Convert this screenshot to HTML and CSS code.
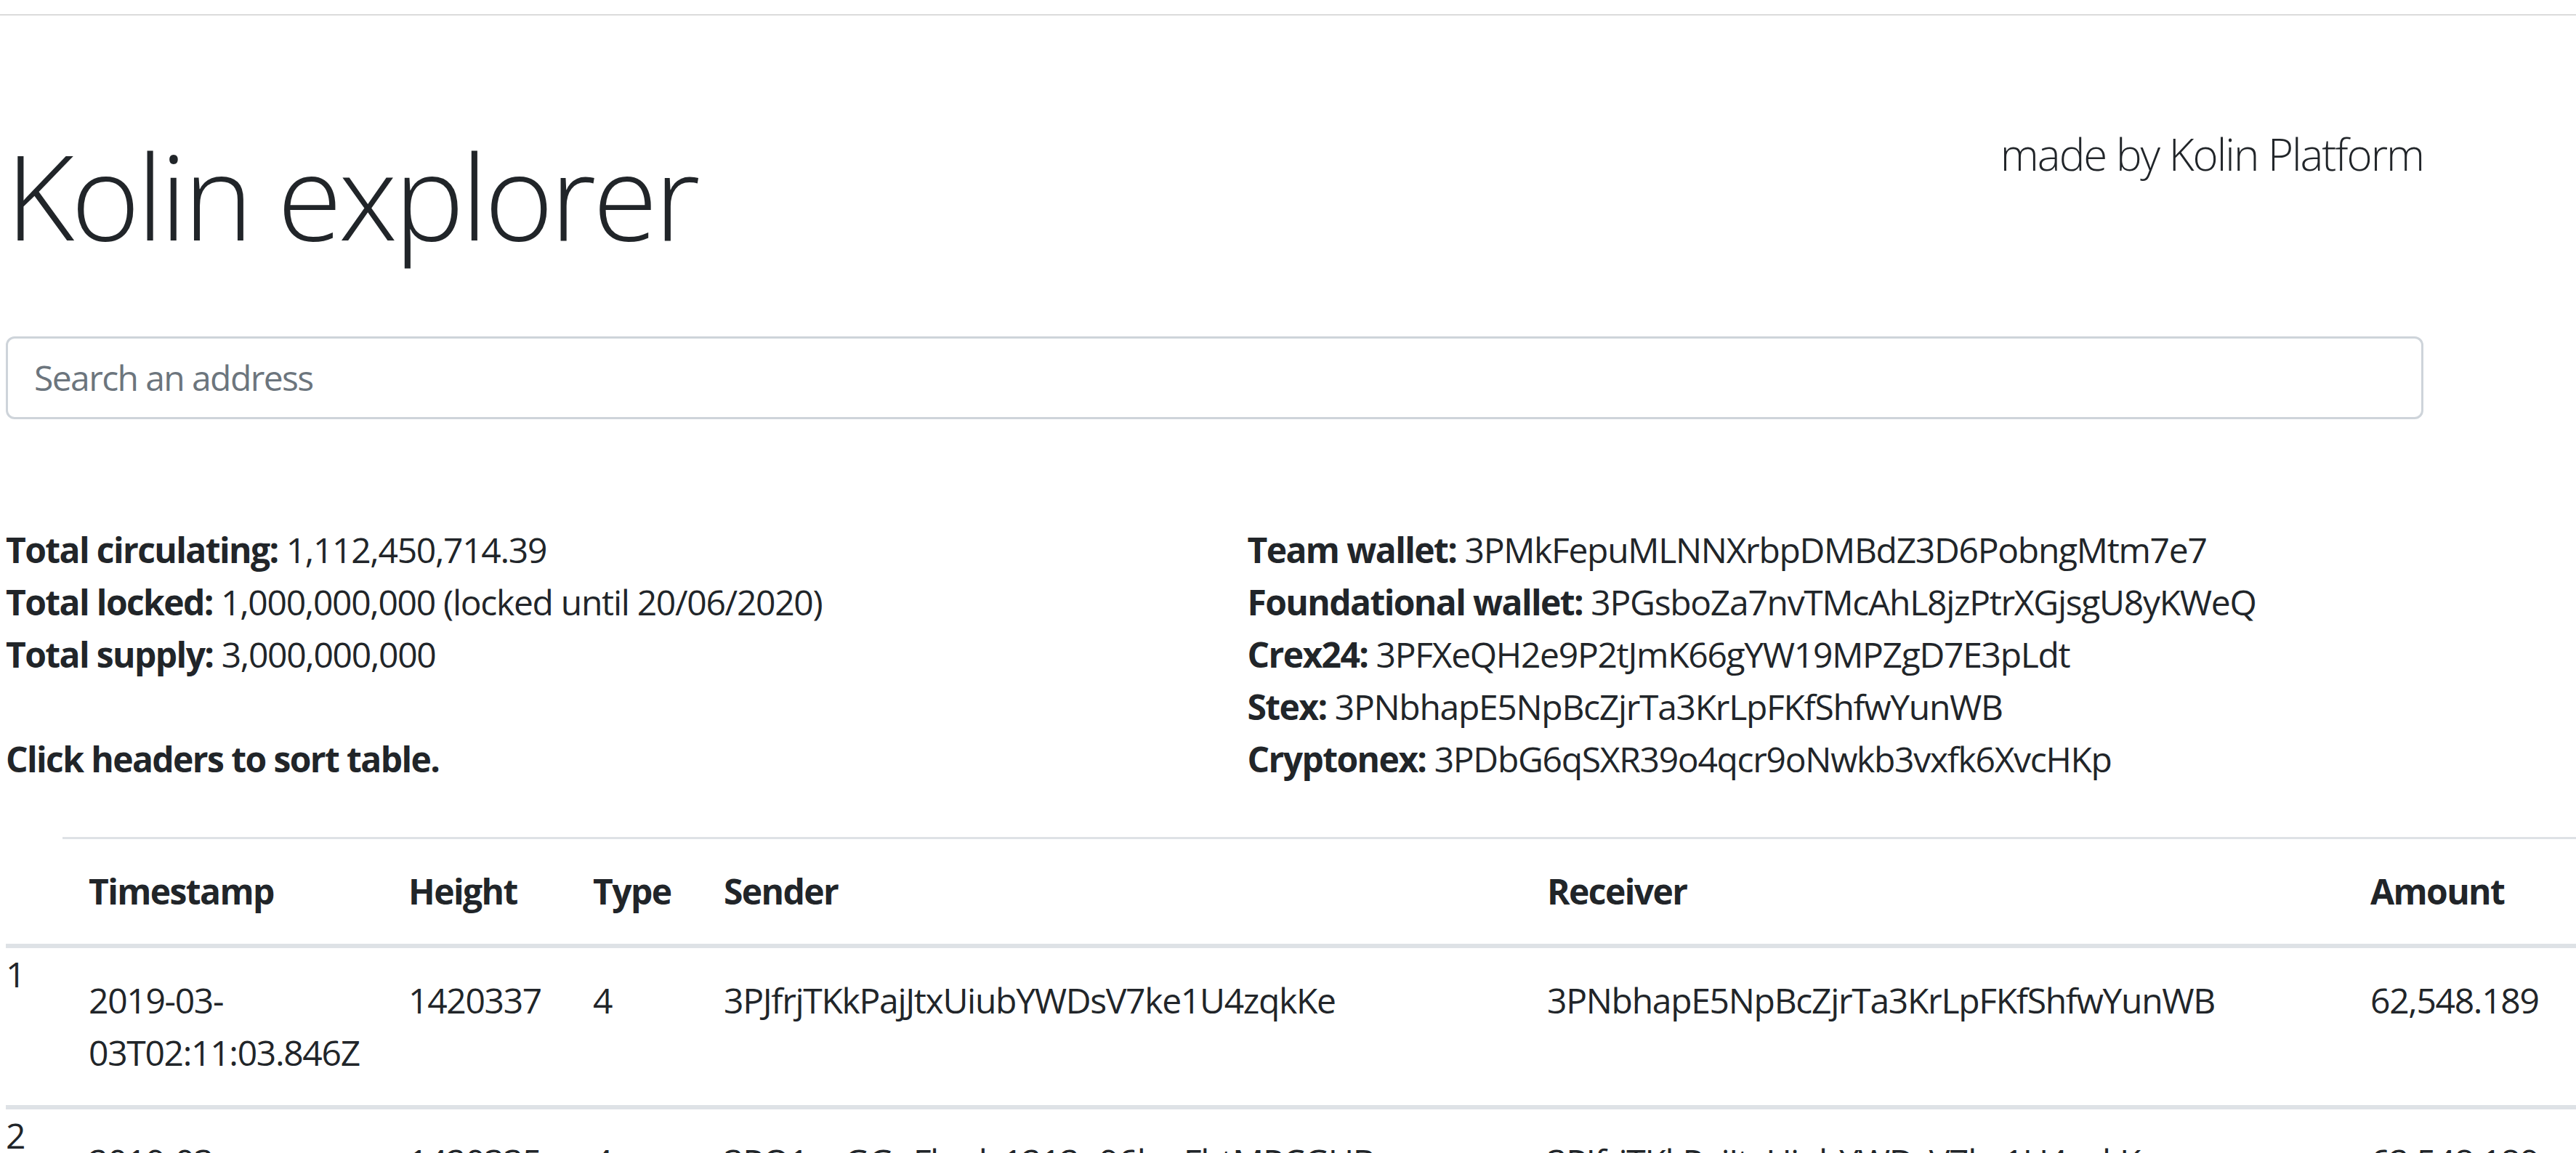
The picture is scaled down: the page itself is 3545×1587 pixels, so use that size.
FILE: index.html
```html
<!DOCTYPE html>
<html lang="en">
<head>
<meta charset="utf-8">
<title>Kolin explorer</title>
<link rel="stylesheet" href="styles.css">
</head>
<body>
<div class="topline"></div>
<div class="page">
  <header class="masthead">
    <h1 class="title">Kolin explorer</h1>
    <p class="credit">made by Kolin Platform</p>
  </header>
  <input class="search" type="text" placeholder="Search an address">
  <section class="stats">
    <div class="stats-col">
      <div class="stat"><b>Total circulating:</b> 1,112,450,714.39</div>
      <div class="stat"><b>Total locked:</b> 1,000,000,000 (locked until 20/06/2020)</div>
      <div class="stat"><b>Total supply:</b> 3,000,000,000</div>
      <div class="stat note"><b>Click headers to sort table.</b></div>
    </div>
    <div class="stats-col">
      <div class="stat"><b>Team wallet:</b> 3PMkFepuMLNNXrbpDMBdZ3D6PobngMtm7e7</div>
      <div class="stat"><b>Foundational wallet:</b> 3PGsboZa7nvTMcAhL8jzPtrXGjsgU8yKWeQ</div>
      <div class="stat"><b>Crex24:</b> 3PFXeQH2e9P2tJmK66gYW19MPZgD7E3pLdt</div>
      <div class="stat"><b>Stex:</b> 3PNbhapE5NpBcZjrTa3KrLpFKfShfwYunWB</div>
      <div class="stat"><b>Cryptonex:</b> 3PDbG6qSXR39o4qcr9oNwkb3vxfk6XvcHKp</div>
    </div>
  </section>
  <table class="tx">
    <colgroup>
      <col class="c-idx"><col class="c-time"><col class="c-height"><col class="c-type"><col class="c-addr"><col class="c-addr"><col class="c-amount">
    </colgroup>
    <thead>
      <tr>
        <th class="idx"></th>
        <th>Timestamp</th>
        <th>Height</th>
        <th>Type</th>
        <th>Sender</th>
        <th>Receiver</th>
        <th>Amount</th>
      </tr>
    </thead>
    <tbody>
      <tr>
        <td class="idx">1</td>
        <td>2019-03-03T02:11:03.846Z</td>
        <td>1420337</td>
        <td>4</td>
        <td>3PJfrjTKkPajJtxUiubYWDsV7ke1U4zqkKe</td>
        <td>3PNbhapE5NpBcZjrTa3KrLpFKfShfwYunWB</td>
        <td>62,548.189</td>
      </tr>
      <tr>
        <td class="idx">2</td>
        <td>2019-03-03T02:09:41.512Z</td>
        <td>1420335</td>
        <td>4</td>
        <td>3PQ1exGGpFhzdv1212o96hwFhtMPCGUB</td>
        <td>3PJfrjTKkPajJtxUiubYWDsV7ke1U4zqkKe</td>
        <td>62,548.189</td>
      </tr>
    </tbody>
  </table>
</div>
</body>
</html>
```

FILE: styles.css
```css
html, body {
  height: 100%;
  overflow: hidden;
}

body {
  margin: 0;
  font-family: "Open Sans", "Noto Sans", sans-serif;
  font-size: 48px;
  line-height: 72px;
  letter-spacing: -1.3px;
  color: #212529;
  background: #fff;
}

b {
  font-weight: 700;
  letter-spacing: -1.6px;
}

.topline {
  height: 20px;
  border-bottom: 1px solid #bdbdbd;
}

.page {
  margin-left: 8px;
  width: 3327px;
}

.masthead {
  display: flex;
  justify-content: space-between;
  align-items: flex-start;
  margin-top: 147px;
}

.title {
  margin: 0;
  height: 201.6px;
  font-size: 162px;
  font-weight: 300;
  line-height: 201.6px;
  letter-spacing: -4.4px;
}

.credit {
  margin: -1px 0 0;
  font-size: 60px;
  font-weight: 300;
  line-height: 90px;
  letter-spacing: -2px;
}

.search {
  display: block;
  box-sizing: border-box;
  width: 100%;
  height: 114px;
  margin: 93px 0 0;
  padding: 0 36px;
  font-family: inherit;
  font-size: 48px;
  letter-spacing: -1.6px;
  color: #495057;
  background: #fff;
  border: 3px solid #ced4da;
  border-radius: 12px;
  outline: none;
}

.search::placeholder {
  color: #6c757d;
  opacity: 1;
}

.stats {
  display: grid;
  grid-template-columns: 1fr 1fr;
  column-gap: 90px;
  margin-top: 144px;
}

.note {
  margin-top: 72px;
}

.tx {
  margin-top: 71px;
  border-collapse: collapse;
  table-layout: fixed;
  width: 3537px;
}

.c-idx { width: 78px; }
.c-time { width: 440px; }
.c-height { width: 254px; }
.c-type { width: 180px; }
.c-addr { width: 1133px; }
.c-amount { width: 319px; }

.tx th,
.tx td {
  padding: 36px;
  text-align: left;
  vertical-align: top;
}

.tx th {
  font-weight: 700;
  letter-spacing: -1.6px;
  vertical-align: bottom;
  border-top: 3px solid #dee2e6;
  border-bottom: 6px solid #dee2e6;
}

.tx td {
  border-top: 6px solid #dee2e6;
}

.tx .idx {
  padding: 0;
}

.tx th.idx {
  border-top: none;
}
```
